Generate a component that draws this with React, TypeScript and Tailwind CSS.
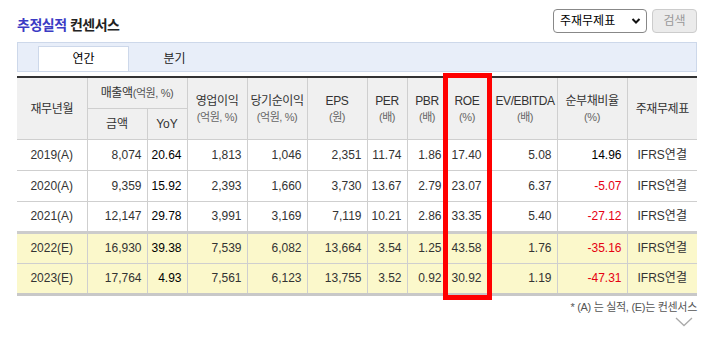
import React from 'react';

const font = { fontFamily: '"Liberation Sans", "Noto Sans CJK KR", sans-serif' };

interface Row {
  year: string;
  est: boolean;
  vals: string[];
}

const rows: Row[] = [
  { year: '2019(A)', est: false, vals: ['8,074', '20.64', '1,813', '1,046', '2,351', '11.74', '1.86', '17.40', '5.08', '14.96'] },
  { year: '2020(A)', est: false, vals: ['9,359', '15.92', '2,393', '1,660', '3,730', '13.67', '2.79', '23.07', '6.37', '-5.07'] },
  { year: '2021(A)', est: false, vals: ['12,147', '29.78', '3,991', '3,169', '7,119', '10.21', '2.86', '33.35', '5.40', '-27.12'] },
  { year: '2022(E)', est: true, vals: ['16,930', '39.38', '7,539', '6,082', '13,664', '3.54', '1.25', '43.58', '1.76', '-35.16'] },
  { year: '2023(E)', est: true, vals: ['17,764', '4.93', '7,561', '6,123', '13,755', '3.52', '0.92', '30.92', '1.19', '-47.31'] },
];

const widths = [70, 60, 40, 60, 60, 60, 40, 40, 40, 70, 70, 70];

const TwoLine = ({ top, sub, extra = '' }: { top: string; sub: string; extra?: string }) => (
  <th rowSpan={2} className={`border border-[#cfcfcf] font-normal text-[12px] leading-[16px] text-[#333] tracking-[-0.4px] pt-[2px] ${extra}`}>
    <div>{top}</div>
    <div className="text-[11px] text-[#666]">{sub}</div>
  </th>
);

const App: React.FC = () => {
  return (
    <div className="w-[712px] h-[342px] bg-white relative" style={font}>
      <div className="pl-[17px] pr-[15px]">
        {/* 제목 + 검색 */}
        <div className="flex items-center justify-between h-[42px] pt-[2px]">
          <h2 className="text-[14px] font-bold tracking-[-0.5px] pt-[7px]">
            <span className="text-[#3b3bc4]">추정실적</span>{' '}
            <span className="text-[#222]">컨센서스</span>
          </h2>
          <div className="flex items-center gap-[5px] pb-[2px]">
            <div className="w-[94px] h-[24px] border border-[#888] rounded-[4px] flex items-center justify-between pl-[6px] pr-[5px] text-[12px] text-black">
              <span>주재무제표</span>
              <svg width="10" height="8" viewBox="0 0 10 8">
                <path d="M1.5 2 L5 5.5 L8.5 2" stroke="#111" strokeWidth="2" fill="none" />
              </svg>
            </div>
            <div className="w-[45px] h-[24px] border border-[#ccc] rounded-[4px] bg-[#ebebeb] text-[#999] text-[12px] flex items-center justify-center">
              검색
            </div>
          </div>
        </div>

        {/* 탭 */}
        <div className="h-[30px] bg-[#e8eef9] border border-[#cdd8ea] flex items-end pl-[20px]">
          <div className="w-[91px] h-[25px] bg-white border border-b-0 border-[#cdd8ea] flex items-center justify-center text-[12px] text-black">
            연간
          </div>
          <div className="w-[91px] h-[25px] flex items-center justify-center text-[12px] text-[#222]">
            분기
          </div>
        </div>

        {/* 표 */}
        <table className="mt-[4px] table-fixed border-collapse w-[680px] border-t-2 border-t-[#333] text-[12px] text-[#333]">
          <colgroup>
            {widths.map((w, i) => (
              <col key={i} style={{ width: w }} />
            ))}
          </colgroup>
          <thead className="bg-[#f0f0f0]">
            <tr className="h-[31px]">
              <th rowSpan={2} className="border border-[#cfcfcf] border-l-0 font-normal text-[12px] tracking-[-0.4px] pt-[2px]">재무년월</th>
              <th colSpan={2} className="border border-[#cfcfcf] font-normal tracking-[-0.4px]">
                매출액<span className="text-[11px] text-[#555]">(억원, %)</span>
              </th>
              <TwoLine top="영업이익" sub="(억원, %)" />
              <TwoLine top="당기순이익" sub="(억원, %)" />
              <TwoLine top="EPS" sub="(원)" />
              <TwoLine top="PER" sub="(배)" />
              <TwoLine top="PBR" sub="(배)" />
              <TwoLine top="ROE" sub="(%)" />
              <TwoLine top="EV/EBITDA" sub="(배)" extra="pl-[6px]" />
              <TwoLine top="순부채비율" sub="(%)" />
              <th rowSpan={2} className="border border-[#cfcfcf] border-r-0 font-normal tracking-[-0.4px] pt-[2px]">주재무제표</th>
            </tr>
            <tr className="h-[31px]">
              <th className="border border-[#cfcfcf] font-normal">금액</th>
              <th className="border border-[#cfcfcf] font-normal">YoY</th>
            </tr>
          </thead>
          <tbody>
            {rows.map((r, ri) => (
              <tr
                key={r.year}
                className={`h-[31px] ${r.est ? 'bg-[#fbf8cb]' : 'bg-white'} ${
                  ri === 3 ? 'border-t-[3px] border-t-[#cccccc]' : ''
                } ${ri === 4 ? 'border-b-[3px] border-b-[#c8c8c8]' : ''}`}
              >
                <td className="border border-[#cfcfcf] border-l-0 text-center">{r.year}</td>
                {r.vals.map((v, i) => (
                  <td
                    key={i}
                    className={`border border-[#cfcfcf] text-right pr-[5px] ${
                      i === 1 ? 'text-black' : ''
                    } ${i === 9 ? (v.startsWith('-') ? 'text-[#e60012]' : 'text-black') : ''} ${
                      i === 7 ? 'text-center pr-0 pl-[4px]' : ''
                    }`}
                  >
                    {v}
                  </td>
                ))}
                <td className="border border-[#cfcfcf] border-r-0 text-center">IFRS연결</td>
              </tr>
            ))}
          </tbody>
        </table>

        <div className="text-right text-[11px] text-[#555] mt-[3px] tracking-[-0.3px]">* (A) 는 실적, (E)는 컨센서스</div>
        <div className="flex justify-end pr-[4px] mt-[2px]">
          <svg width="18" height="10" viewBox="0 0 18 10">
            <path d="M1 1 L9 8.5 L17 1" stroke="#aaa" strokeWidth="1.3" fill="none" />
          </svg>
        </div>
      </div>

      {/* ROE 강조 박스 */}
      <div className="absolute left-[443px] top-[73px] w-[49px] h-[227px] border-[5px] border-[#ff0000]" />
    </div>
  );
};

export default App;
